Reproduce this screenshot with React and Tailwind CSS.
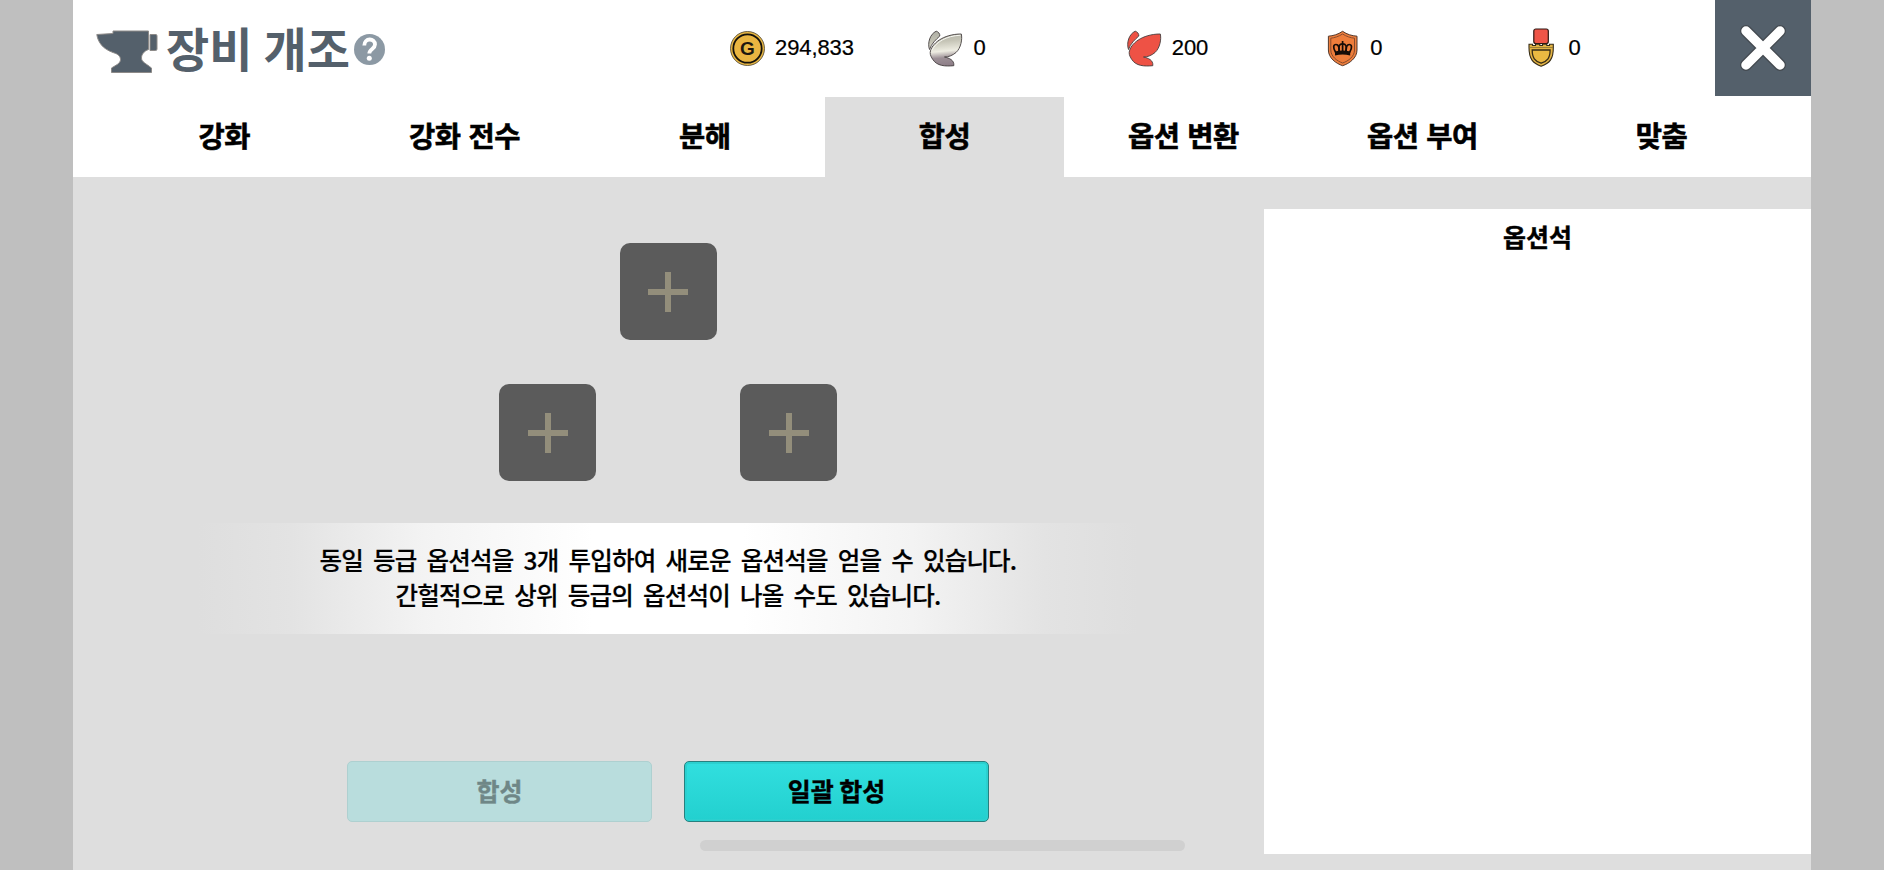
import React, { useState } from 'react';

const TABS = ['강화', '강화 전수', '분해', '합성', '옵션 변환', '옵션 부여', '맞춤'];

function AnvilIcon() {
  return (
    <svg className="w-[62px] h-11 shrink-0 mt-1.5" viewBox="0 0 62 44">
      <g fill="#54606b" stroke="#8d8a88" strokeWidth="1" strokeLinejoin="round">
        <path d="M0.800 5.500L17 4.500V2H52.500V20.500C48 22 45.500 25.500 45.500 29C45.500 33 50 34.500 55.500 39V43.500H15.500V39C20 36 24.500 34.500 24.500 30.500C24.500 26 20 24.500 17 23.500C7 20 2 13.500 0.800 5.500Z" />
        <path d="M54 5.500H60Q61 5.500 61 7V20Q61 21.500 59.500 21.500H54Z" />
      </g>
    </svg>
  );
}

function GoldIcon() {
  return (
    <svg className="w-[35px] h-[37px]" viewBox="0 0 35 37">
      <circle cx="17.500" cy="18.500" r="17" fill="#e8b743" stroke="#4d4430" strokeWidth="0.800" />
      <circle cx="17.500" cy="18.500" r="14.200" fill="#e9b541" stroke="#14110b" strokeWidth="1.800" />
      <text x="17.400" y="25.300" textAnchor="middle" fontSize="19" className="font-['Liberation_Sans',sans-serif] font-bold" fill="#1b1710">G</text>
    </svg>
  );
}

function WingIcon({ silver }) {
  const fill = silver ? 'url(#silver)' : '#ee5245';
  return (
    <svg className="w-[35px] h-[37px]" viewBox="0 0 35 37">
      <defs>
        <linearGradient id="silver" gradientUnits="userSpaceOnUse" x1="14" y1="3" x2="17" y2="36">
          <stop offset="0" stopColor="#b3b3a8" />
          <stop offset="0.250" stopColor="#c5c4b6" />
          <stop offset="0.550" stopColor="#eeede2" />
          <stop offset="0.750" stopColor="#9c9096" />
          <stop offset="1" stopColor="#8d7d87" />
        </linearGradient>
      </defs>
      <g fill={fill} stroke="#45403f" strokeWidth="0.900" strokeLinejoin="round">
        <path d="M1.500 19.500C-0.800 13 2 4 8.200 1.200C10.500 1.800 12 3.800 11.800 6C8 9.500 3.500 13.500 1.500 19.500Z" />
        <path d="M2.200 22.500C3 14 15 4 33.300 4C34.500 9 33 18 28 22.500C24.500 25.500 20.500 27 16.500 27C21 28 26.500 30 25.800 35.700C17 36.500 9 36 4.800 29.500C3.500 27.500 2 25 2.200 22.500Z" />
      </g>
      {silver && <path d="M3.800 20.500C8 12 18 6 32.500 5.200" fill="none" stroke="#f7f7f1" strokeWidth="1" />}
    </svg>
  );
}

function ShieldIcon() {
  return (
    <svg className="w-[35px] h-[37px]" viewBox="0 0 35 37">
      <path d="M17.600 1.300C13 4.500 8 5.800 3.400 6.200V20C3.400 28 11 33.500 17.600 35.700C24.500 33.500 32 28 32 20V6.200C27 5.800 22 4.500 17.600 1.300Z" fill="#ee7f3e" stroke="#54382b" strokeWidth="1" />
      <path d="M17.600 4C13.500 6.500 9.500 7.800 5.800 8.200V20C5.800 26.500 12 31 17.600 33C23.500 31 29.500 26.500 29.500 20V8.200C25.500 7.800 21.500 6.500 17.600 4Z" fill="#ee7d3b" stroke="#7d452a" strokeWidth="0.900" />
      <g fill="none" stroke="#160c08" strokeWidth="1.700">
        <path d="M10.700 22.500C7.500 17.500 8.500 14.500 11 14.500C13.500 14.500 14.300 17 14.300 22" />
        <path d="M14.300 22C13 16 14.500 13.800 17.600 13.800C20.700 13.800 22.200 16 20.900 22" />
        <path d="M24.500 22.500C27.700 17.500 26.700 14.500 24.200 14.500C21.700 14.500 20.900 17 20.900 22" />
        <path d="M17.600 11V22" />
      </g>
      <path d="M10 21.500Q17.600 19.500 25.200 21.500V25.500Q17.600 23.600 10 25.500Z" fill="#160c08" />
    </svg>
  );
}

function MedalIcon() {
  return (
    <svg className="w-[35px] h-[39px] -mt-px" viewBox="0 0 35 39">
      <rect x="9.800" y="1" width="14.500" height="14.500" rx="2" fill="#ef5548" stroke="#2c1712" strokeWidth="1.200" />
      <path d="M5 16.200H8.500V17.500H11.500V16.200H15.800V17.500H18.500V16.200H22.800V17.500H25.500V16.200H29.300V19.500C29.500 31 25.500 35.500 17.100 38.200C9 35.500 5 31 5 19.500Z" fill="#e2b344" stroke="#352b17" strokeWidth="1.100" />
      <path d="M5.500 19.500H29" stroke="#8d7333" strokeWidth="0.800" />
      <path d="M8.200 22H26.100C26.100 30 23.500 33 17.100 35.200C10.800 33 8.200 30 8.200 22Z" fill="#eab942" stroke="#352b17" strokeWidth="1.300" />
    </svg>
  );
}

const CURRENCIES = [
  { icon: <GoldIcon />, amount: '294,833' },
  { icon: <WingIcon silver />, amount: '0' },
  { icon: <WingIcon />, amount: '200' },
  { icon: <ShieldIcon />, amount: '0' },
  { icon: <MedalIcon />, amount: '0' },
];

function Slot() {
  return (
    <button className="w-[97px] h-[97px] rounded-[10px] bg-[#5b5b5b] flex items-center justify-center">
      <svg className="w-10 h-10" viewBox="0 0 40 40">
        <path d="M20 0V40M0 20H40" stroke="#938e7b" strokeWidth="6" />
      </svg>
    </button>
  );
}

export default function App() {
  const [active, setActive] = useState('합성');

  return (
    <div className="w-full h-[870px] bg-[#bfbfbf] px-[73px] overflow-hidden font-['Noto_Sans_CJK_KR',sans-serif] text-black">
      <div className="h-full bg-[#dedede] flex flex-col">
        <header className="h-24 bg-white flex shrink-0">
          <div className="w-[657px] shrink-0 pl-[23px] flex items-center">
            <AnvilIcon />
            <h1 className="ml-2 w-[188px] pb-1 text-[47px] leading-none font-bold tracking-[0.1px] text-[#54606b] whitespace-nowrap">장비 개조</h1>
            <svg className="w-[31px] h-[31px] mt-0.5 shrink-0" viewBox="0 0 31 31">
              <circle cx="15.500" cy="15.500" r="15.500" fill="#8c99a4" />
              <path d="M10.300 11.500C10.300 3.500 21 3.800 21 10.500C21 15 15.300 14.800 15.300 19.500" fill="none" stroke="#fff" strokeWidth="3.800" />
              <circle cx="15.300" cy="24.300" r="2.500" fill="#fff" />
            </svg>
          </div>
          <div className="flex-1 min-w-0 flex items-center">
            {CURRENCIES.map((c, i) => (
              <div key={i} className="w-[198.4px] shrink-0 flex items-center gap-2.5">
                {c.icon}
                <span className="font-['Liberation_Sans',sans-serif] text-[22px] leading-none tracking-[-0.1px] [-webkit-text-stroke:0.2px_black]">{c.amount}</span>
              </div>
            ))}
          </div>
          <button className="w-24 h-24 shrink-0 bg-[#54606b] flex items-center justify-center z-10">
            <svg className="w-12 h-12" viewBox="0 0 48 48" strokeLinecap="round">
              <path d="M7 7L41 41M41 7L7 41" stroke="#444a50" strokeWidth="12" />
              <path d="M7 7L41 41M41 7L7 41" stroke="#fff" strokeWidth="9.500" />
            </svg>
          </button>
        </header>

        <nav className="h-[81px] shrink-0 bg-white grid grid-cols-[repeat(3,240.3px)_repeat(4,239px)] pl-[31px] pt-px">
          {TABS.map((tab) => (
            <button
              key={tab}
              onClick={() => setActive(tab)}
              className={`pb-[3px] text-[28.5px] leading-none font-bold tracking-[-0.5px] [word-spacing:2px] [-webkit-text-stroke:0.6px_black] ${tab === active ? 'bg-[#dedede]' : ''}`}
            >
              {tab}
            </button>
          ))}
        </nav>

        <main className="flex-1 flex min-h-0">
          <section className="w-[1191px] shrink-0 pr-px pt-[66px] flex flex-col items-center">
            <Slot />
            <div className="mt-11 flex gap-36">
              <Slot />
              <Slot />
            </div>
            <div className="mt-[42px] w-[940px] h-[111px] pb-[3px] flex flex-col items-center justify-center bg-[linear-gradient(90deg,#dedede_0%,#e3e3e3_10%,#f3f3f3_24%,#ffffff_42%,#ffffff_58%,#f3f3f3_76%,#e3e3e3_90%,#dedede_100%)] text-[24.5px] leading-[35.5px] font-medium tracking-[-0.8px] [word-spacing:5.3px] whitespace-nowrap [-webkit-text-stroke:0.2px_black]">
              <p>동일 등급 옵션석을 3개 투입하여 새로운 옵션석을 얻을 수 있습니다.</p>
              <p>간헐적으로 상위 등급의 옵션석이 나올 수도 있습니다.</p>
            </div>
            <div className="mt-[127px] flex gap-8 text-[25px] leading-none font-bold">
              <button disabled className="w-[305px] h-[61px] pb-0.5 rounded-[5px] border border-[#aed0d0] bg-[#b9dddd] text-[#6f8787] [-webkit-text-stroke:0.4px_#6f8787]">합성</button>
              <button className="w-[305px] h-[61px] pb-0.5 rounded-[5px] border border-[#27807f] bg-linear-to-b from-[#31dfdf] to-[#22d0cf] shadow-[inset_0_0_0_2px_#2bd0cf] [-webkit-text-stroke:0.4px_black]">일괄 합성</button>
            </div>
          </section>
          <aside className="flex-1 mt-8 mb-4 pt-[13px] bg-white text-center">
            <h2 className="text-[25px] leading-[28px] font-bold [-webkit-text-stroke:0.4px_black]">옵션석</h2>
          </aside>
        </main>
      </div>
      <div className="absolute left-[700px] top-[840px] w-[485px] h-[11px] rounded-full bg-[#d0d0d0]" />
    </div>
  );
}
